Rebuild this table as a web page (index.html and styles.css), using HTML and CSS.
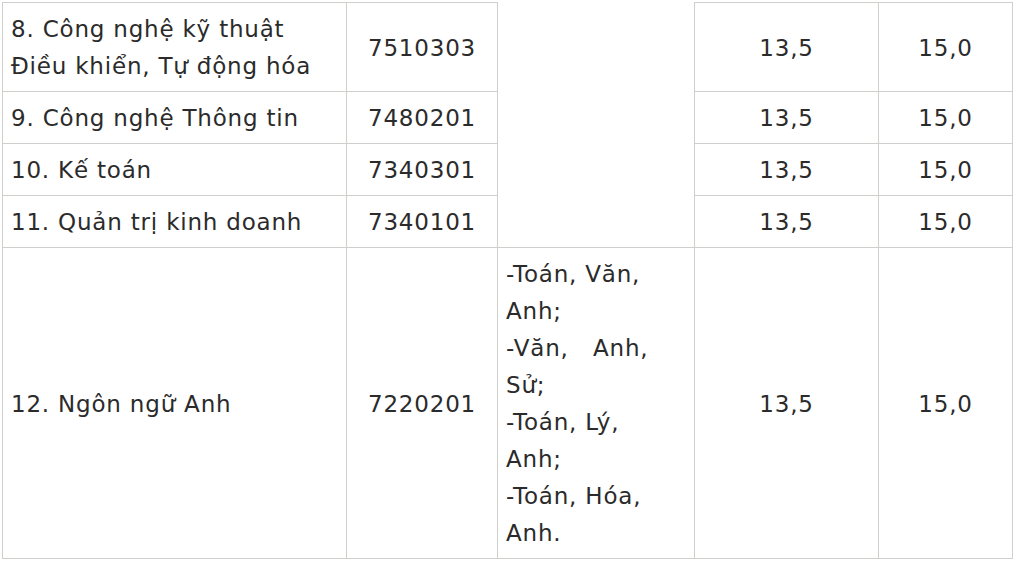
FILE: index.html
```html
<!DOCTYPE html>
<html lang="vi">
<head>
<meta charset="utf-8">
<title>Bảng điểm</title>
<link rel="stylesheet" href="styles.css">
</head>
<body>
<table class="scores">
  <colgroup>
    <col class="c-name">
    <col class="c-code">
    <col class="c-combo">
    <col class="c-s1">
    <col class="c-s2">
  </colgroup>
  <tbody>
    <tr class="r-two">
      <td class="name">8. Công nghệ kỹ thuật<br>Điều khiển, Tự động hóa</td>
      <td class="num">7510303</td>
      <td class="combo open" rowspan="4"></td>
      <td class="num">13,5</td>
      <td class="num">15,0</td>
    </tr>
    <tr class="r-one">
      <td class="name">9. Công nghệ Thông tin</td>
      <td class="num">7480201</td>
      <td class="num">13,5</td>
      <td class="num">15,0</td>
    </tr>
    <tr class="r-one">
      <td class="name">10. Kế toán</td>
      <td class="num">7340301</td>
      <td class="num">13,5</td>
      <td class="num">15,0</td>
    </tr>
    <tr class="r-one">
      <td class="name">11. Quản trị kinh doanh</td>
      <td class="num">7340101</td>
      <td class="num">13,5</td>
      <td class="num">15,0</td>
    </tr>
    <tr class="r-big">
      <td class="name">12. Ngôn ngữ Anh</td>
      <td class="num">7220201</td>
      <td class="combo">-Toán, Văn,<br>Anh;<br>-Văn,&nbsp;&nbsp; Anh,<br>Sử;<br>-Toán, Lý,<br>Anh;<br>-Toán, Hóa,<br>Anh.</td>
      <td class="num">13,5</td>
      <td class="num">15,0</td>
    </tr>
  </tbody>
</table>
</body>
</html>
```

FILE: styles.css
```css
html, body {
  margin: 0;
  padding: 0;
  background: #ffffff;
}

body {
  padding: 2px 0 0 2px;
  font-family: "DejaVu Sans", Verdana, sans-serif;
  font-size: 23px;
  letter-spacing: 0.8px;
  color: #2b2b2b;
}

.scores {
  border-collapse: collapse;
  table-layout: fixed;
  width: 1010px;
}

.c-name { width: 344px; }
.c-code { width: 151px; }
.c-combo { width: 197px; }
.c-s1 { width: 184px; }
.c-s2 { width: 134px; }

.scores td {
  border: 1px solid #cfcfcb;
  padding: 8px 8px 6px 8px;
  line-height: 37px;
  vertical-align: middle;
}

.scores td.open {
  border-top: none;
}

.scores .num {
  text-align: center;
}

.scores .name {
  text-align: left;
}

.scores .combo {
  text-align: left;
}

.r-two { height: 89px; }
.r-one { height: 52px; }
.r-big { height: 311px; }
```
